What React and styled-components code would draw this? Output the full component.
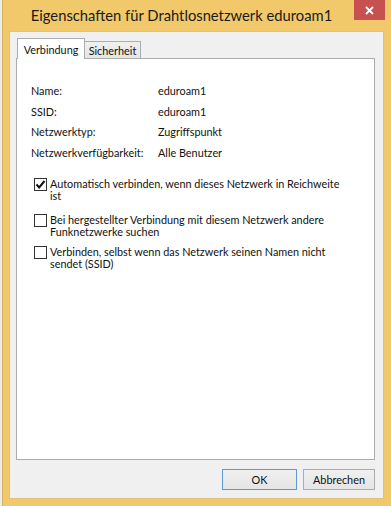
import React from "react";
import styled, { createGlobalStyle } from "styled-components";

const GlobalStyle = createGlobalStyle`
    html, body {
        margin: 0;
        padding: 0;
        background: #eeeeee;
    }
    body {
        font-family: Lato, 'Liberation Sans', sans-serif;
        color: #111;
    }
`;

const Desktop = styled.div`
    width: 391px;
    height: 506px;
    display: flex;
    padding-left: 2px;
    box-sizing: border-box;
    background: #ececec;
    overflow: hidden;
`;

const Window = styled.div`
    flex: 1;
    min-width: 0;
    display: flex;
    flex-direction: column;
    background: #f1c96b;
    border-left: 1px solid #d8b05a;
    padding: 0 7px 7px 6px;
`;

const TitleBar = styled.div`
    height: 31px;
    display: flex;
    align-items: flex-start;
`;

const Title = styled.div`
    flex: 1;
    text-align: center;
    line-height: 31px;
    font-size: 14.75px;
    color: #1a1a1a;
    white-space: nowrap;
`;

const CloseButton = styled.div`
    width: 31px;
    height: 20px;
    background: #c75050;
    display: flex;
    align-items: center;
    justify-content: center;
    margin-right: -1px;
`;

const Client = styled.div`
    flex: 1;
    display: flex;
    flex-direction: column;
    background: #f0f0f0;
    padding: 7px 9px 9px 7px;
    box-shadow: inset 0 0 0 1px #e2c27a;
`;

const TabStrip = styled.div`
    height: 20px;
    display: flex;
    align-items: flex-end;
    padding-left: 1px;
`;

const Tab = styled.div`
    box-sizing: border-box;
    width: ${p => p.$width}px;
    height: ${p => (p.$active ? 21 : 17)}px;
    margin-bottom: ${p => (p.$active ? -1 : 0)}px;
    position: relative;
    z-index: ${p => (p.$active ? 2 : 1)};
    border: 1px solid #adadad;
    border-bottom: none;
    border-left: ${p => (p.$active ? '1px solid #adadad' : 'none')};
    background: ${p => (p.$active ? '#fff' : 'linear-gradient(#f0f0f0, #e5e5e5)')};
    font-size: 10.85px;
    display: flex;
    justify-content: center;
    padding-top: ${p => (p.$active ? 4 : 2)}px;
`;

const Panel = styled.div`
    height: 402px;
    box-sizing: border-box;
    border: 1px solid #adadad;
    background: #fff;
    padding: 22px 14px 0;
    font-size: 10.85px;
`;

const InfoGrid = styled.div`
    display: grid;
    grid-template-columns: 127px auto;
    line-height: 20.5px;
`;

const CheckList = styled.div`
    display: flex;
    flex-direction: column;
    margin-top: 15px;
    padding-left: 3px;
`;

const CheckRow = styled.div`
    display: flex;
    align-items: flex-start;
    gap: 3px;
    line-height: 12px;
    margin-top: ${p => p.$gap || 0}px;
`;

const Line = styled.div`
    white-space: nowrap;
`;

const Box = styled.div`
    width: 13px;
    height: 13px;
    box-sizing: border-box;
    border: 1px solid #333;
    background: #fff;
    flex-shrink: 0;
    display: flex;
    align-items: center;
    justify-content: center;
`;

const ButtonRow = styled.div`
    display: flex;
    justify-content: flex-end;
    gap: 6px;
    margin-top: 9px;
`;

const Button = styled.div`
    box-sizing: border-box;
    width: ${p => p.$width}px;
    height: 21px;
    border: 1px solid ${p => (p.$default ? '#5c9ad6' : '#acacac')};
    background: linear-gradient(#f0f0f0, #e5e5e5);
    font-size: 10.85px;
    display: flex;
    align-items: center;
    justify-content: center;
`;

const Check = () => (
    <svg width="11" height="11" viewBox="0 0 11 11">
        <path d="M1.5 5.5 L4.2 8.5 L9.5 2" fill="none" stroke="#111" strokeWidth="2" />
    </svg>
);

const CheckItem = ({ checked, lines, gap }) => (
    <CheckRow $gap={gap}>
        <Box>{checked && <Check />}</Box>
        <div>
            {lines.map((text, i) => (
                <Line key={i}>{text}</Line>
            ))}
        </div>
    </CheckRow>
);

const info = [
    ["Name:", "eduroam1"],
    ["SSID:", "eduroam1"],
    ["Netzwerktyp:", "Zugriffspunkt"],
    ["Netzwerkverfügbarkeit:", "Alle Benutzer"],
];

export default function App() {
    return (
        <>
            <GlobalStyle />
            <Desktop>
                <Window>
                    <TitleBar>
                        <Title>Eigenschaften für Drahtlosnetzwerk eduroam1</Title>
                        <CloseButton>
                            <svg width="9" height="9" viewBox="0 0 9 9">
                                <path d="M1 1 L8 8 M8 1 L1 8" stroke="#fff" strokeWidth="1.8" />
                            </svg>
                        </CloseButton>
                    </TitleBar>
                    <Client>
                        <TabStrip>
                            <Tab $active $width={68}>Verbindung</Tab>
                            <Tab $width={56}>Sicherheit</Tab>
                        </TabStrip>
                        <Panel>
                            <InfoGrid>
                                {info.map(([k, v]) => (
                                    <React.Fragment key={k}>
                                        <div>{k}</div>
                                        <div>{v}</div>
                                    </React.Fragment>
                                ))}
                            </InfoGrid>
                            <CheckList>
                                <CheckItem
                                    checked
                                    lines={["Automatisch verbinden, wenn dieses Netzwerk in Reichweite", "ist"]}
                                />
                                <CheckItem
                                    gap={12}
                                    lines={["Bei hergestellter Verbindung mit diesem Netzwerk andere", "Funknetzwerke suchen"]}
                                />
                                <CheckItem
                                    gap={8}
                                    lines={["Verbinden, selbst wenn das Netzwerk seinen Namen nicht", "sendet (SSID)"]}
                                />
                            </CheckList>
                        </Panel>
                        <ButtonRow>
                            <Button $default $width={75}>OK</Button>
                            <Button $width={72}>Abbrechen</Button>
                        </ButtonRow>
                    </Client>
                </Window>
            </Desktop>
        </>
    );
}
